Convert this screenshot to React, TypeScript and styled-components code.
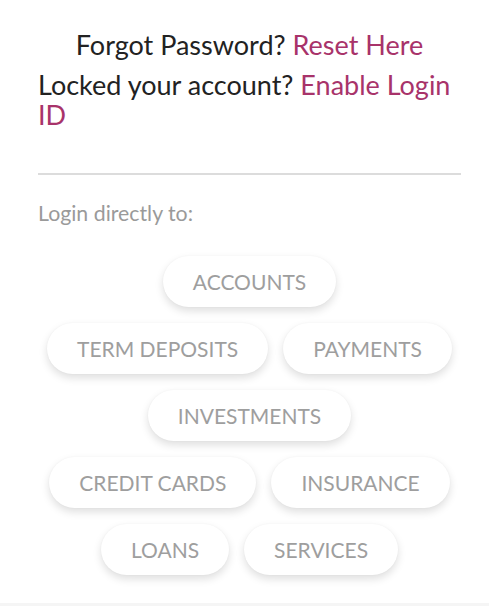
import React from "react";
import styled, { createGlobalStyle } from "styled-components";

const Global = createGlobalStyle`
  html, body { margin: 0; padding: 0; background: #ffffff; }
  body { font-family: Lato, "Open Sans", sans-serif; }
`;

const Page = styled.div`
  width: 489px;
  height: 606px;
  display: flex;
  flex-direction: column;
  box-sizing: border-box;
  background: #ffffff;
  overflow: hidden;
`;

const Content = styled.div`
  flex: 1;
  padding: 30px 28px 0 38px;
  display: flex;
  flex-direction: column;
`;

const Line = styled.p<{ $center?: boolean }>`
  margin: 0 0 10px 0;
  font-size: 27px;
  line-height: 30px;
  color: #222222;
  text-align: ${(p) => (p.$center ? "center" : "left")};
`;

const Link = styled.a`
  color: #a8336a;
  text-decoration: none;
`;

const Divider = styled.hr`
  margin: 33px 0 0 0;
  border: none;
  height: 2px;
  background: #dcdcdc;
`;

const Label = styled.div`
  margin-top: 26px;
  font-size: 21.3px;
  line-height: 25px;
  color: #9a9a9a;
`;

const Pills = styled.div`
  margin-top: 30px;
  margin-right: -10px;
  margin-left: -10px;
  display: flex;
  flex-direction: column;
  align-items: center;
  gap: 16px;
`;

const PillRow = styled.div`
  display: flex;
  justify-content: center;
  gap: 15px;
`;

const Pill = styled.button`
  height: 51px;
  padding: 0 30px;
  border: none;
  border-radius: 26px;
  background: #ffffff;
  box-shadow: 0 4px 9px rgba(0, 0, 0, 0.13), 0 0 2px rgba(0, 0, 0, 0.04);
  font-family: Lato, "Open Sans", sans-serif;
  font-size: 21px;
  color: #9e9e9e;
  text-transform: uppercase;
  cursor: pointer;
`;

const Footer = styled.div`
  height: 3px;
  background: #f5f5f5;
`;

const rows: string[][] = [
  ["Accounts"],
  ["Term Deposits", "Payments"],
  ["Investments"],
  ["Credit Cards", "Insurance"],
  ["Loans", "Services"],
];

export default function App() {
  return (
    <Page>
      <Global />
      <Content>
        <Line $center>
          Forgot Password? <Link href="#">Reset Here</Link>
        </Line>
        <Line>
          Locked your account? <Link href="#">Enable Login ID</Link>
        </Line>
        <Divider />
        <Label>Login directly to:</Label>
        <Pills>
          {rows.map((row, i) => (
            <PillRow key={i}>
              {row.map((name) => (
                <Pill key={name}>{name}</Pill>
              ))}
            </PillRow>
          ))}
        </Pills>
      </Content>
      <Footer />
    </Page>
  );
}
